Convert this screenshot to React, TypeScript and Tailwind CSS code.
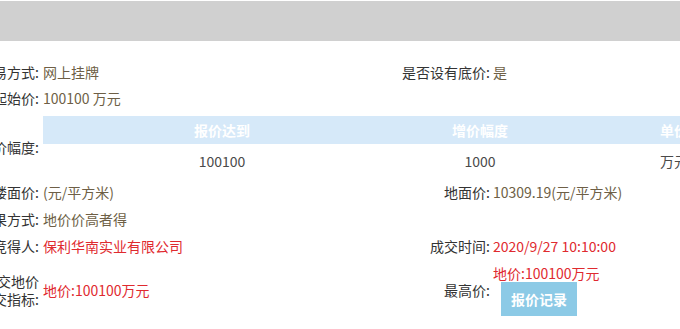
const FONT = 'font-["Noto_Sans_CJK_SC","Noto_Sans",sans-serif]';

type RowProps = {
  label: React.ReactNode;
  value?: React.ReactNode;
  rlabel?: React.ReactNode;
  rvalue?: React.ReactNode;
  h?: string;
};

function Label({ children }: { children: React.ReactNode }) {
  return <div className="flex justify-end whitespace-nowrap text-[#333]">{children}</div>;
}

function Row({ label, value, rlabel, rvalue, h = 'h-[27px]' }: RowProps) {
  return (
    <div className={`grid grid-cols-[39px_301px_150px_1fr] items-center ${h}`}>
      <Label>{label}</Label>
      <div className="whitespace-nowrap pl-[4px]">{value}</div>
      <Label>{rlabel}</Label>
      <div className="whitespace-nowrap pl-[3px]">{rvalue}</div>
    </div>
  );
}

const BROWN = 'text-[#6e5f46]';
const RED = 'text-[#df2a2f]';

export default function App() {
  return (
    <div className={`h-[329px] w-[680px] overflow-hidden bg-white text-[14px] leading-[18px] ${FONT}`}>
      <div className="mt-[1px] h-[40px] bg-[#d0d0d0]" />

      <div className="pt-[18px]">
        <Row
          h="h-[26px]"
          label="交易方式:"
          value={<span className={BROWN}>网上挂牌</span>}
          rlabel="是否设有底价:"
          rvalue={<span className={BROWN}>是</span>}
        />
        <Row h="h-[26px]" label="起始价:" value={<span className={BROWN}>100100 万元</span>} />

        {/* 加价幅度 */}
        <div className="mt-[5px] grid grid-cols-[39px_1fr] items-center">
          <Label>加价幅度:</Label>
          <div className="pl-[4px]">
            <div className="flex h-[28px] items-center bg-[#d6e9f9] font-bold text-white">
              <div className="w-[358px] text-center">报价达到</div>
              <div className="w-[158px] text-center">增价幅度</div>
              <div className="w-[230px] text-center">单价</div>
            </div>
            <div className="flex h-[34px] items-center text-[#4a4a4a]">
              <div className="w-[358px] text-center">100100</div>
              <div className="w-[158px] text-center">1000</div>
              <div className="w-[230px] text-center">万元</div>
            </div>
          </div>
        </div>

        <Row
          label="楼面价:"
          value={<span className={BROWN}>(元/平方米)</span>}
          rlabel="地面价:"
          rvalue={<span className={BROWN}>10309.19(元/平方米)</span>}
        />
        <Row label="结果方式:" value={<span className={BROWN}>地价价高者得</span>} />
        <Row
          h="h-[28px]"
          label="竞得人:"
          value={<span className={RED}>保利华南实业有限公司</span>}
          rlabel="成交时间:"
          rvalue={<span className={RED}>2020/9/27 10:10:00</span>}
        />

        <div className="mt-[4px] grid grid-cols-[39px_301px_150px_1fr] items-center">
          <div className="flex flex-col items-end whitespace-nowrap text-[#333]">
            <span>成交地价</span>
            <span>成交指标:</span>
          </div>
          <div className={`pl-[4px] ${RED}`}>地价:100100万元</div>
          <Label>最高价:</Label>
          <div className="flex flex-col items-start pl-[3px]">
            <span className={RED}>地价:100100万元</span>
            <button
              type="button"
              className="ml-[8px] h-[34px] w-[76px] bg-[#8ccae6] font-bold text-white"
            >
              报价记录
            </button>
          </div>
        </div>
      </div>
    </div>
  );
}
